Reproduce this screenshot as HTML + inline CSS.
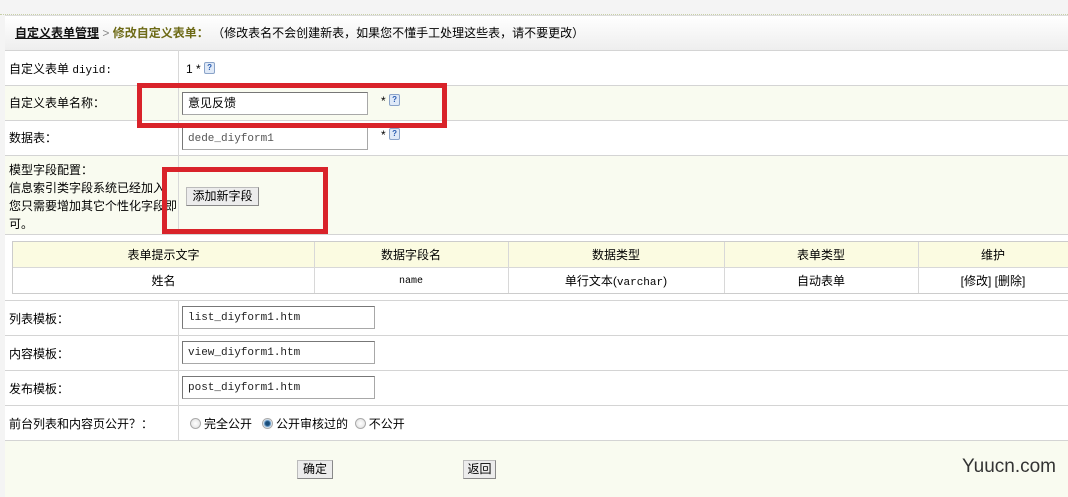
<!DOCTYPE html>
<html><head><meta charset="utf-8"><style>
*{margin:0;padding:0;box-sizing:border-box}
body{width:1068px;height:497px;overflow:hidden;background:#f4f4f4;font-family:"Liberation Sans","Noto Sans CJK SC","WenQuanYi Zen Hei",sans-serif;font-size:12px;line-height:14px;color:#000;position:relative}
.a{position:absolute}
.row{position:absolute;left:5px;right:0;border-top:1px solid #d4d4d4}
.w{background:#fff}.y{background:#f9fbf0}
.lab{position:absolute;left:4px;white-space:nowrap;line-height:14px}
.vl{position:absolute;left:178px;width:1px;background:#d8d8d8}
.inp{position:absolute;left:182px;height:23px;border:1px solid #a8a8a8;border-top-color:#777;border-left-color:#777;background:#fff;font-family:"Liberation Mono","Noto Sans CJK SC",monospace;font-size:11px;line-height:13px;padding:5px 5px;color:#222}
.q{display:inline-block;width:11px;height:12px;border:1px solid #8aa3c8;background:#dfe9f7;border-radius:2px;font-size:8px;line-height:10px;text-align:center;color:#2a5db0;font-weight:bold;vertical-align:top}
.red{position:absolute;border:5px solid #d9232a}
.btn{position:absolute;background:#ececec;border:1px solid #bbb;border-right-color:#888;border-bottom-color:#888;font-size:12px;text-align:center;line-height:17px}
.radio{display:inline-block;width:11px;height:11px;border-radius:50%;border:1px solid #aaa;background:radial-gradient(#fff,#ddd);vertical-align:-1px;margin-right:3px}
.radio.on{background:radial-gradient(#1a4d7a 30%,#5a8fbf 45%,#fff 70%)}
.c{position:absolute;text-align:center;line-height:14px}
</style></head><body>
<div class="a" style="left:0;right:0;top:14px;border-top:1px dotted #c8d0a8"></div>
<div class="a" style="left:5px;top:15px;bottom:0;width:1px;background:#ccc"></div>
<div class="row" style="top:15px;height:35px;background:linear-gradient(#fff,#eee);border-color:#ddd">
 <div class="a" style="left:10px;top:10px;white-space:nowrap"><b style="text-decoration:underline;color:#111">自定义表单管理</b> <span style="color:#888">&gt;</span> <b style="color:#6d6a16">修改自定义表单：</b> （修改表名不会创建新表，如果您不懂手工处理这些表，请不要更改）</div>
</div>
<div class="row w" style="top:50px;height:35px"><div class="lab" style="top:11px">自定义表单 <span style="font-family:'Liberation Mono',monospace;font-size:11px">diyid:</span></div><div class="a" style="left:181px;top:11px">1 * <span class="q">?</span></div></div>
<div class="row y" style="top:85px;height:35px"><div class="lab" style="top:10px">自定义表单名称：</div></div>
<div class="row w" style="top:120px;height:35px"><div class="lab" style="top:10px">数据表：</div></div>
<div class="row y" style="top:155px;height:79px"><div class="lab" style="top:5px;line-height:18px;width:172px;overflow:hidden">模型字段配置：<br>信息索引类字段系统已经加入<br>您只需要增加其它个性化字段即<br>可。</div></div>
<div class="vl" style="top:50px;height:184px"></div>
<div class="inp" style="top:92px;width:186px;font-family:'Liberation Sans','Noto Sans CJK SC',sans-serif;font-size:12px;padding:4px 5px;color:#000">意见反馈</div>
<div class="a" style="left:381px;top:94px">* <span class="q">?</span></div>
<div class="inp" style="top:127px;width:186px;color:#555">dede_diyform1</div>
<div class="a" style="left:381px;top:128px">* <span class="q">?</span></div>
<div class="btn" style="left:186px;top:187px;width:73px;height:19px">添加新字段</div>
<div class="row w" style="top:234px;height:66px"></div>
<div class="a" style="left:12px;top:241px;right:-2px;height:53px;border:1px solid #ccc;background:#fff">
 <div class="a" style="left:0;right:0;top:0;height:26px;background:#fbfbe1;border-bottom:1px solid #d8d8d8"></div>
 <div class="a" style="left:301px;top:0;bottom:0;width:1px;background:#d8d8d8"></div>
 <div class="a" style="left:495px;top:0;bottom:0;width:1px;background:#d8d8d8"></div>
 <div class="a" style="left:711px;top:0;bottom:0;width:1px;background:#d8d8d8"></div>
 <div class="a" style="left:905px;top:0;bottom:0;width:1px;background:#d8d8d8"></div>
 <div class="c" style="top:6px;left:0;width:301px">表单提示文字</div>
 <div class="c" style="top:6px;left:301px;width:194px">数据字段名</div>
 <div class="c" style="top:6px;left:495px;width:216px">数据类型</div>
 <div class="c" style="top:6px;left:711px;width:194px">表单类型</div>
 <div class="c" style="top:6px;left:905px;width:150px">维护</div>
 <div class="c" style="top:32px;left:0;width:301px">姓名</div>
 <div class="c" style="top:33px;left:301px;width:194px;font-family:'Liberation Mono',monospace;font-size:10px">name</div>
 <div class="c" style="top:32px;left:495px;width:216px">单行文本(<span style="font-family:'Liberation Mono',monospace;font-size:11px">varchar</span>)</div>
 <div class="c" style="top:32px;left:711px;width:194px">自动表单</div>
 <div class="c" style="top:32px;left:905px;width:150px">[修改] [删除]</div>
</div>
<div class="row w" style="top:300px;height:35px"><div class="lab" style="top:11px">列表模板：</div></div>
<div class="row w" style="top:335px;height:35px"><div class="lab" style="top:11px">内容模板：</div></div>
<div class="row w" style="top:370px;height:35px"><div class="lab" style="top:11px">发布模板：</div></div>
<div class="row w" style="top:405px;height:35px"><div class="lab" style="top:11px">前台列表和内容页公开？：</div>
 <div class="a" style="left:185px;top:11px;white-space:nowrap"><span class="radio"></span>完全公开 &nbsp;&nbsp;<span class="radio on"></span>公开审核过的 &nbsp;<span class="radio"></span>不公开</div></div>
<div class="vl" style="top:300px;height:140px"></div>
<div class="inp" style="top:306px;width:193px">list_diyform1.htm</div>
<div class="inp" style="top:341px;width:193px">view_diyform1.htm</div>
<div class="inp" style="top:376px;width:193px">post_diyform1.htm</div>
<div class="row y" style="top:440px;height:57px">
 <div class="a" style="right:12px;top:15px;font-size:19px;line-height:22px;color:#333">Yuucn.com</div>
</div>
<div class="btn" style="left:297px;top:460px;width:36px;height:19px">确定</div>
<div class="btn" style="left:463px;top:460px;width:33px;height:19px">返回</div>
<div class="red" style="left:137px;top:83px;width:310px;height:45px"></div>
<div class="red" style="left:162px;top:167px;width:166px;height:67px"></div>
</body></html>
